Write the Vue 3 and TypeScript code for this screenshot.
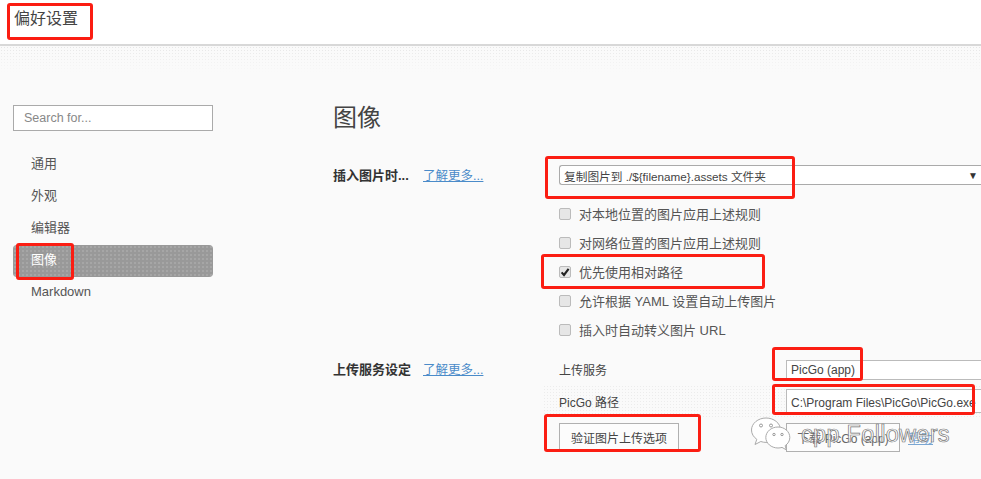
<script setup lang="ts">
const menu: string[] = ['通用', '外观', '编辑器', '图像', 'Markdown']
const checks = [
  { text: '对本地位置的图片应用上述规则', on: false },
  { text: '对网络位置的图片应用上述规则', on: false },
  { text: '优先使用相对路径', on: true },
  { text: '允许根据 YAML 设置自动上传图片', on: false },
  { text: '插入时自动转义图片 URL', on: false },
]
const marks = [
  { cls: 'm-title' },
  { cls: 'm-menu' },
  { cls: 'm-select' },
  { cls: 'm-check' },
  { cls: 'm-service' },
  { cls: 'm-path' },
  { cls: 'm-verify' },
]
</script>

<template>
  <div class="page">
    <header class="top">偏好设置</header>
    <div class="band"></div>
    <div class="content">
      <aside class="side">
        <div class="search">Search for...</div>
        <ul class="menu">
          <li v-for="m in menu" :key="m" :class="{ active: m === '图像' }">{{ m }}</li>
        </ul>
      </aside>
      <main class="main">
        <h1>图像</h1>
        <section class="group first">
          <div class="head"><b>插入图片时...</b><a>了解更多...</a></div>
          <div class="body">
            <div class="select"><span>复制图片到 ./${filename}.assets 文件夹</span><i>▼</i></div>
            <div class="checks">
              <label v-for="c in checks" :key="c.text">
                <span class="box" :class="{ on: c.on }">
                  <svg v-if="c.on" viewBox="0 0 12 12" width="12" height="12"><path d="M2.600 6.400 5 9l4.600-6.200" fill="none" stroke="#222" stroke-width="2.100"/></svg>
                </span>
                {{ c.text }}
              </label>
            </div>
          </div>
        </section>
        <section class="group second">
          <div class="head"><b>上传服务设定</b><a>了解更多...</a></div>
          <div class="body">
            <div class="field"><span class="name">上传服务</span><div class="input one">PicGo (app)</div></div>
            <div class="field dotted"><span class="name">PicGo 路径</span><div class="input two">C:\Program Files\PicGo\PicGo.exe</div></div>
            <div class="actions">
              <button class="verify" type="button">验证图片上传选项</button>
              <button class="down" type="button">下载 PicGo (app)</button>
              <a class="doc">帮助</a>
            </div>
          </div>
        </section>
      </main>
    </div>
    <div v-for="m in marks" :key="m.cls" class="mark" :class="m.cls"></div>
    <div class="water">
      <svg width="42" height="36" viewBox="0 0 42 36">
        <path d="M16 2C8 2 1.500 7.500 1.500 14c0 3.800 2 7 5.300 9.300L5 28.500l5.800-3c1.700.6 3.400.9 5.200.9 7.800 0 14.500-5.500 14.500-12.400S23.800 2 16 2Z" fill="#fff" stroke="#aaa" stroke-width="1"/>
        <path d="M28 11c-6.700 0-12.200 4.700-12.200 10.500S21.300 32 28 32c1.400 0 2.800-.2 4-.6l4.400 2.500-1.300-4.200c2.900-1.900 4.700-4.900 4.700-8.200C39.800 15.700 34.700 11 28 11Z" fill="#fff" stroke="#aaa" stroke-width="1"/>
        <circle cx="11" cy="9.500" r="1.500" fill="none" stroke="#999"/><circle cx="21" cy="9.500" r="1.500" fill="none" stroke="#999"/>
        <circle cx="24" cy="18.500" r="1.200" fill="none" stroke="#999"/><circle cx="32" cy="18.500" r="1.200" fill="none" stroke="#999"/>
      </svg>
      <span>cpp Followers</span>
    </div>
  </div>
</template>

<style>
html, body { margin: 0; background: #fafafa; }
</style>

<style scoped>
.page {
  position: relative;
  width: 981px;
  height: 479px;
  overflow: hidden;
  background: #fafafa;
  color: #444;
  font-family: "Liberation Sans", "Noto Sans CJK SC", sans-serif;
  font-size: 13px;
}
.top {
  box-sizing: border-box;
  height: 46px;
  padding: 8px 0 0 14px;
  background: #fff;
  border-bottom: 2px solid #d8d8d8;
  font-size: 16px;
  line-height: 22px;
  color: #444;
}
.band {
  height: 26px;
  background-image: radial-gradient(#e4e4e4 0.6px, transparent 0.8px);
  background-size: 3px 3px;
  -webkit-mask-image: linear-gradient(#000, transparent);
  mask-image: linear-gradient(#000, transparent);
}
.content { display: flex; }
.side { width: 200px; margin: 33px 120px 0 13px; flex: none; }
.search {
  box-sizing: border-box;
  height: 26px;
  padding-left: 10px;
  line-height: 24px;
  border: 1px solid #aaa;
  background: #fff;
  color: #888;
  font-size: 12.500px;
}
.menu { list-style: none; margin: 18px 0 0; padding: 0; }
.menu li {
  height: 32px;
  line-height: 30px;
  padding-left: 18px;
  color: #555;
  border-radius: 4px;
}
.menu li.active {
  color: #fff;
  background-color: #999;
  background-image: radial-gradient(#b5b5b5 0.6px, transparent 0.8px);
  background-size: 4px 4px;
}
.main { flex: 1; min-width: 0; }
h1 {
  margin: 29px 0 0;
  font-size: 24px;
  line-height: 34px;
  font-weight: 400;
  color: #444;
}
.group { display: flex; }
.first { margin-top: 27px; }
.second { margin-top: 17px; }
.head { width: 226px; flex: none; line-height: 18px; padding-top: 5px; white-space: nowrap; }
.second .head { padding-top: 0; margin-top: 0; }
.head b { display: inline-block; width: 90px; color: #333; font-weight: 700; }
.head a, .doc { color: #4a8bc9; text-decoration: underline; font-size: 12.500px; }
.body { flex: 1; min-width: 0; }
.select {
  box-sizing: border-box;
  height: 20px;
  margin-top: 3px;
  display: flex;
  justify-content: space-between;
  align-items: center;
  padding: 0 3px 0 4px;
  background: #fff;
  border: 1px solid #aaa;
  border-right: 0;
  border-radius: 3px 0 0 3px;
  font-size: 11.700px;
  color: #444;
}
.select i { font-style: normal; font-size: 10px; color: #333; }
.checks { margin-top: 14px; }
.checks label {
  display: flex;
  align-items: center;
  gap: 8px;
  height: 29px;
  font-size: 13px;
  color: #555;
}
.box {
  box-sizing: border-box;
  width: 12px;
  height: 12px;
  flex: none;
  border: 1px solid #bbb;
  border-radius: 2px;
  background: #e6e6e6;
  display: flex;
}
.box svg { margin: -1px; }
.field { display: flex; align-items: center; height: 32px; font-size: 12px; }
.second .body { margin-top: -8px; }
.dotted {
  margin-left: -16px;
  padding-left: 16px;
  background-image: radial-gradient(#ececec 0.6px, transparent 0.8px);
  background-size: 3px 3px;
}
.name { width: 227px; flex: none; }
.input {
  box-sizing: border-box;
  flex: 1;
  padding-left: 4px;
  background: #fff;
  border: 1px solid #bbb;
  border-right: 0;
  font-size: 12px;
  white-space: nowrap;
  overflow: hidden;
}
.input.one { height: 20px; line-height: 18px; margin-top: 1px; }
.input.two { height: 24px; line-height: 26px; }
.actions { display: flex; align-items: center; margin-top: 5px; padding-top: 1px; }
button {
  box-sizing: border-box;
  height: 29px;
  padding: 0;
  background: #fcfcfc;
  border: 1px solid #b0b0b0;
  font: inherit;
  font-size: 12px;
  color: #444;
}
.verify { width: 120px; margin-right: 107px; }
.down { width: 114px; margin-right: 8px; color: #666; }
.doc { color: #7aa6d2; }
.mark {
  position: absolute;
  box-sizing: border-box;
  border: 3px solid #fb1d12;
  border-radius: 3px;
}
.m-title { left: 7px; top: 3px; width: 86px; height: 37px; }
.m-menu { left: 16px; top: 243px; width: 58px; height: 37px; }
.m-select { left: 545px; top: 156px; width: 250px; height: 43px; }
.m-check { left: 541px; top: 254px; width: 224px; height: 35px; }
.m-service { left: 772px; top: 347px; width: 91px; height: 34px; }
.m-path { left: 772px; top: 384px; width: 203px; height: 31px; }
.m-verify { left: 544px; top: 414px; width: 157px; height: 38px; }
.water {
  position: absolute;
  left: 750px;
  top: 416px;
  display: flex;
  align-items: center;
  gap: 9px;
}
.water span {
  font-size: 23.500px;
  letter-spacing: 0.300px;
  color: rgba(255, 255, 255, 0.8);
  -webkit-text-stroke: 0.700px #777;
}
</style>
